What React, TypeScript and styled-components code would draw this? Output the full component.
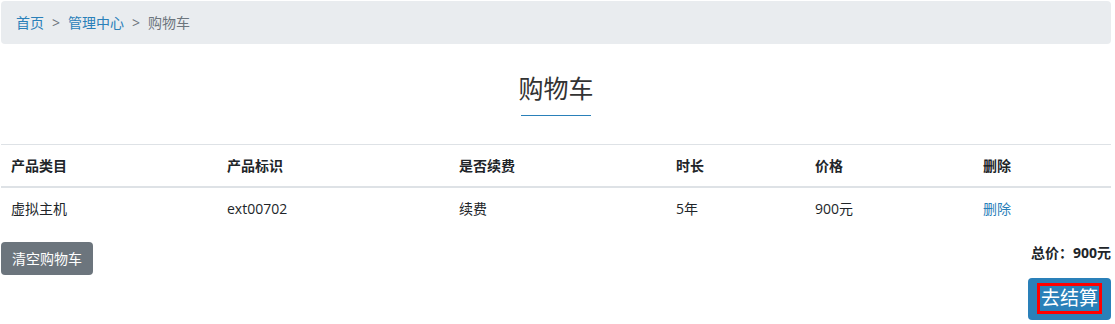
import React from 'react';
import styled, { createGlobalStyle } from 'styled-components';

const GlobalStyle = createGlobalStyle`
    body {
        margin: 0;
        background: #fff;
        font-family: "Segoe UI", "Open Sans", "Noto Sans CJK SC", sans-serif;
        font-size: 14px;
        line-height: 1.5;
        color: #212529;
    }
`;

const Page = styled.div`
    width: 1110px;
    padding: 1px 0 0 1px;
`;

const Breadcrumb = styled.ol`
    display: flex;
    align-items: center;
    list-style: none;
    margin: 0;
    padding: 11px 15px;
    background: #e9ecef;
    border-radius: 4px;
    height: 21px;
`;

const Crumb = styled.li<{ $first?: boolean; $active?: boolean }>`
    color: ${p => (p.$active ? '#6c757d' : '#2a80b9')};
    padding-left: ${p => (p.$first ? '0' : '8px')};
    &::before {
        content: ${p => (p.$first ? 'none' : '">"')};
        color: #6c757d;
        padding-right: 8px;
    }
`;

const Heading = styled.div`
    display: flex;
    flex-direction: column;
    align-items: center;
    margin-top: 29px;
`;

const Title = styled.h2`
    margin: 0;
    font-size: 25px;
    font-weight: 400;
    line-height: 1.2;
    color: #333;
`;

const Underline = styled.div`
    width: 70px;
    height: 1px;
    background: #2a80b9;
    margin-top: 12px;
`;

const Table = styled.table`
    width: 1110px;
    margin-top: 28px;
    border-collapse: collapse;
    table-layout: fixed;
`;

const Th = styled.th<{ $w: number }>`
    box-sizing: border-box;
    width: ${p => p.$w}px;
    text-align: left;
    font-weight: 700;
    padding: 10px;
    border-top: 1px solid #dee2e6;
    border-bottom: 2px solid #dee2e6;
`;

const Td = styled.td`
    padding: 10px;
`;

const Link = styled.a`
    color: #2a80b9;
    text-decoration: none;
`;

const Footer = styled.div`
    display: flex;
    justify-content: space-between;
    align-items: flex-start;
    margin-top: 13px;
`;

const GrayButton = styled.button`
    font-family: inherit;
    font-size: 14px;
    line-height: 21px;
    padding: 6px 11px;
    color: #fff;
    background: #6c757d;
    border: 0;
    border-radius: 4px;
`;

const Summary = styled.div`
    display: flex;
    flex-direction: column;
    align-items: flex-end;
    gap: 15px;
`;

const Total = styled.div`
    font-weight: 700;
`;

const CheckoutButton = styled.button`
    font-family: inherit;
    font-size: 19px;
    line-height: 25px;
    padding: 5px 9px 6px;
    color: #fff;
    background: #2a80b9;
    border: 0;
    border-radius: 4px;
`;

const Focus = styled.span`
    display: inline-block;
    border: 3px solid #f00;
    padding: 0 1px;
`;

const columns = [
    { label: '产品类目', w: 216 },
    { label: '产品标识', w: 232 },
    { label: '是否续费', w: 217 },
    { label: '时长', w: 139 },
    { label: '价格', w: 168 },
    { label: '删除', w: 138 },
];

const App = () => {
    return (
        <Page>
            <GlobalStyle />
            <Breadcrumb>
                <Crumb $first>首页</Crumb>
                <Crumb>管理中心</Crumb>
                <Crumb $active>购物车</Crumb>
            </Breadcrumb>

            <Heading>
                <Title>购物车</Title>
                <Underline />
            </Heading>

            <Table>
                <thead>
                    <tr>
                        {columns.map(c => (
                            <Th key={c.label} $w={c.w}>{c.label}</Th>
                        ))}
                    </tr>
                </thead>
                <tbody>
                    <tr>
                        <Td>虚拟主机</Td>
                        <Td>ext00702</Td>
                        <Td>续费</Td>
                        <Td>5年</Td>
                        <Td>900元</Td>
                        <Td><Link href="#">删除</Link></Td>
                    </tr>
                </tbody>
            </Table>

            <Footer>
                <GrayButton>清空购物车</GrayButton>
                <Summary>
                    <Total>总价：900元</Total>
                    <CheckoutButton><Focus>去结算</Focus></CheckoutButton>
                </Summary>
            </Footer>
        </Page>
    );
};

export default App;
